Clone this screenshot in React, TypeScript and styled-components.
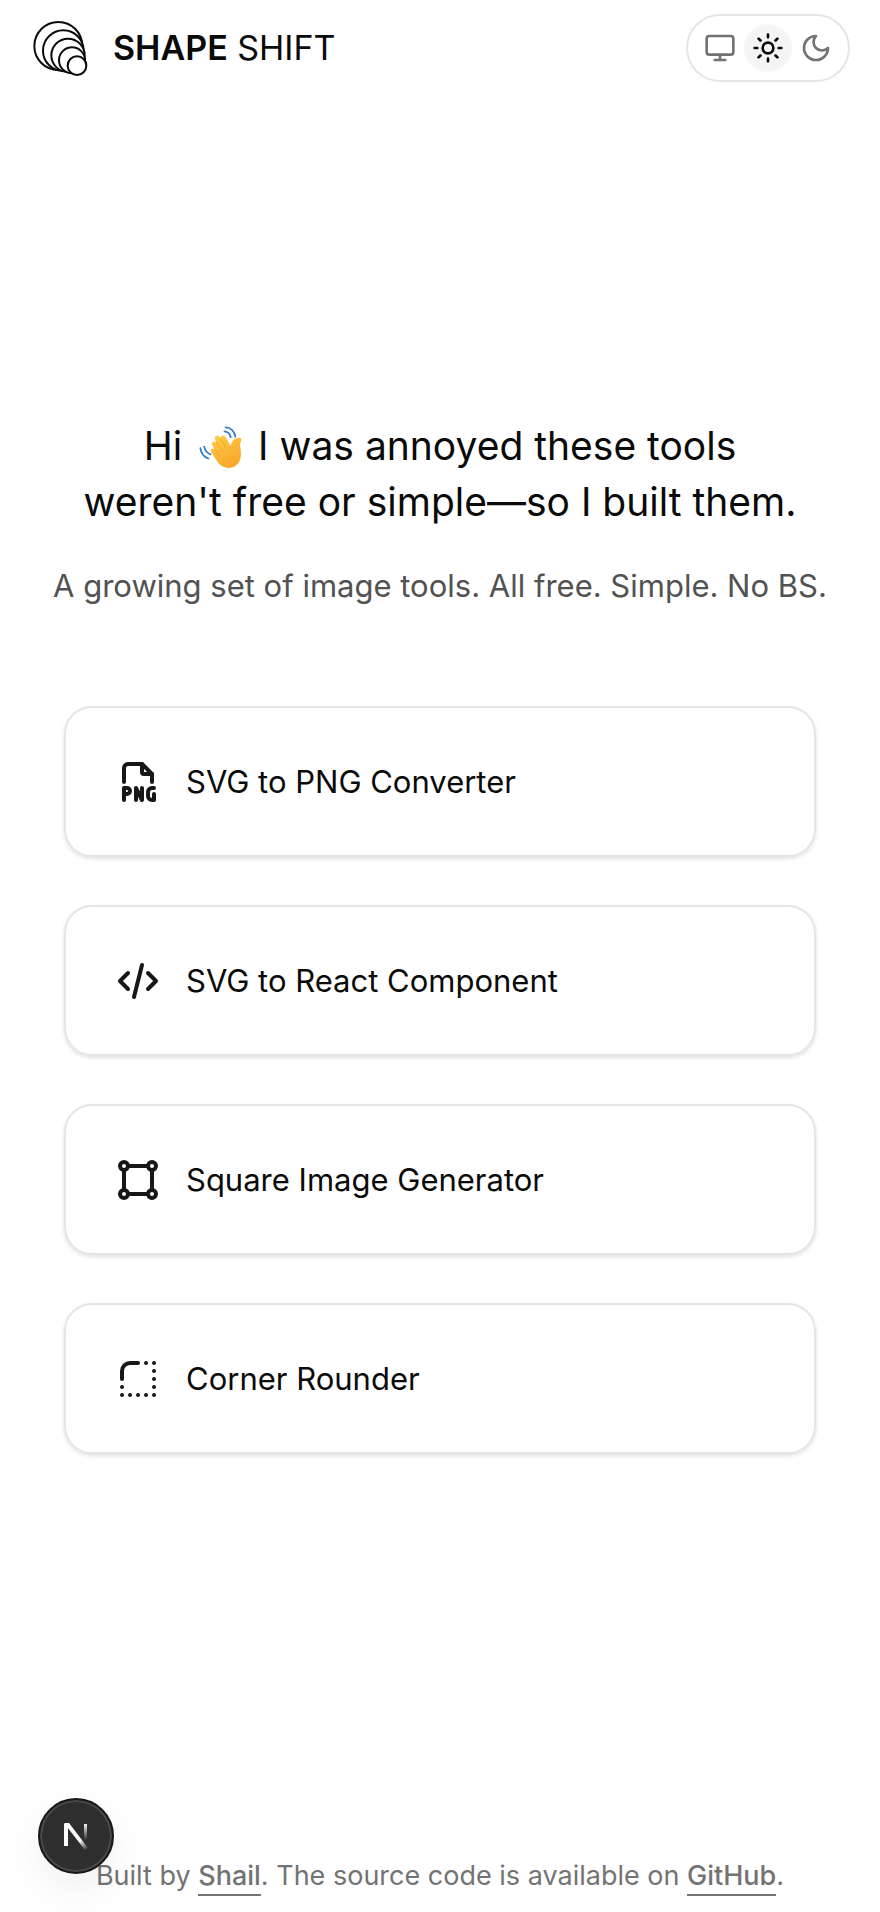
import React from "react";
import styled, { createGlobalStyle } from "styled-components";
import { TbBorderRadius, TbCode, TbFileTypePng, TbShape } from "react-icons/tb";

const GlobalStyle = createGlobalStyle`
  *, *::before, *::after { box-sizing: border-box; }
  body {
    margin: 0;
    background: #fff;
    color: #0a0a0a;
    font-family: Inter, "Liberation Sans", sans-serif;
  }
`;

const Page = styled.div`
  display: flex;
  flex-direction: column;
  min-height: 100vh;
`;

const Header = styled.header`
  display: flex;
  align-items: center;
  justify-content: space-between;
  min-height: 96px;
  padding: 0 30px 0 32px;
`;

const Brand = styled.a`
  display: flex;
  align-items: center;
  gap: 24px;
  color: inherit;
  font-size: 34px;
  line-height: 48px;
  text-decoration: none;
`;

const BrandName = styled.span`
  strong { font-weight: 600; }
`;

const ThemeSwitch = styled.div`
  display: flex;
  padding: 8px;
  border: 2px solid #e5e5e5;
  border-radius: 34px;
`;

const ThemeButton = styled.button<{ $active?: boolean }>`
  display: grid;
  place-items: center;
  width: 48px;
  height: 48px;
  padding: 0;
  border: 0;
  border-radius: 50%;
  background: ${(p) => (p.$active ? "#f5f5f5" : "transparent")};
  color: ${(p) => (p.$active ? "#0a0a0a" : "#737373")};
  cursor: pointer;
`;

const Main = styled.main`
  display: flex;
  flex: 1;
  flex-direction: column;
  align-items: center;
  justify-content: center;
  padding: 0 32px;
`;

const Title = styled.h1`
  margin: 0;
  font-size: 39px;
  font-weight: 400;
  line-height: 56px;
  text-align: center;
`;

const Wave = styled.svg`
  width: 44px;
  height: 44px;
  margin: 0 4px 0 6px;
  vertical-align: -9px;
`;

const Subtitle = styled.p`
  margin: 32px 0 0;
  color: #525252;
  font-size: 31px;
  line-height: 48px;
  text-align: center;
`;

const Tools = styled.nav`
  display: grid;
  gap: 48px;
  width: 100%;
  max-width: 752px;
  margin-top: 96px;
`;

const ToolCard = styled.a`
  display: flex;
  align-items: center;
  gap: 24px;
  min-height: 151px;
  padding: 0 48px;
  border: 2px solid #e5e5e5;
  border-radius: 28px;
  box-shadow: 0 2px 4px rgba(0, 0, 0, 0.12);
  color: inherit;
  font-size: 31px;
  line-height: 48px;
  text-decoration: none;

  svg { color: #171717; flex: none; }
`;

const Footer = styled.footer`
  padding: 80px 32px 16px;
  color: #737373;
  font-size: 27px;
  line-height: 40px;
  text-align: center;
`;

const FooterLink = styled.a`
  padding-bottom: 2px;
  border-bottom: 2px solid #737373;
  color: inherit;
  font-weight: 500;
  text-decoration: none;
`;

const DevBadge = styled.button`
  position: fixed;
  bottom: 38px;
  left: 38px;
  display: grid;
  place-items: center;
  width: 76px;
  height: 76px;
  padding: 0;
  border: 2px solid #171717;
  border-radius: 50%;
  background: #2e2e2e;
  box-shadow: inset 0 0 0 2px #4a4a4a, 0 16px 48px -8px rgba(0, 0, 0, 0.1);
`;

const rings = [
  [114, 108, 72],
  [129, 122, 61],
  [143, 136, 50],
  [155, 151, 39],
  [170, 167, 28],
];

const Logo = () => (
  <svg width="57" height="57" viewBox="35 30 171 171" aria-hidden="true">
    {rings.map(([cx, cy, r]) => (
      <circle key={r} cx={cx} cy={cy} r={r} fill="#fff" stroke="#0a0a0a" strokeWidth="6" />
    ))}
  </svg>
);

const ThemeIcon = ({ children }: { children: React.ReactNode }) => (
  <svg
    width="32"
    height="32"
    viewBox="0 0 24 24"
    fill="none"
    stroke="currentColor"
    strokeWidth="2"
    strokeLinecap="round"
    strokeLinejoin="round"
    aria-hidden="true"
  >
    {children}
  </svg>
);

const WavingHand = () => (
  <Wave viewBox="0 0 126 126" role="img" aria-label="waving hand">
    <defs>
      <linearGradient id="skin" x1="0" y1="0" x2="0.5" y2="1">
        <stop offset="0" stopColor="#ffcf4a" />
        <stop offset="1" stopColor="#f9a72b" />
      </linearGradient>
    </defs>
    <g fill="none" stroke="#2f7fc4" strokeWidth="5" strokeLinecap="round">
      <path d="M76 7c15 0 26 11 28 26M73 18c9 1 16 8 18 17" />
      <path d="M4 66c2 15 11 26 23 30M15 62c2 11 9 19 18 22" />
    </g>
    <path
      fill="url(#skin)"
      d="M35 78c-5-7 3-14 9-9L38 59c-5-9 5-16 12-9l-4-9c-4-9 8-15 13-6l3 4c-2-9 10-13 15-4l14 25c2-10 6-20 18-23 9-2 15 3 12 8-4 7-4 13-2 22 3 20 1 39-13 49-16 12-38 8-51-7z"
    />
    <path d="M50 50l17 25M61 38l17 28M44 69l13 14" fill="none" stroke="#eb9a25" strokeWidth="2" strokeLinecap="round" />
  </Wave>
);

const NextMark = () => (
  <svg width="28" height="30" viewBox="0 0 28 30" aria-hidden="true">
    <defs>
      <linearGradient id="diagonal" x1="14" y1="16" x2="25" y2="29" gradientUnits="userSpaceOnUse">
        <stop offset="0.3" stopColor="#fff" />
        <stop offset="1" stopColor="#fff" stopOpacity="0" />
      </linearGradient>
      <linearGradient id="stem" x1="0" y1="2" x2="0" y2="19" gradientUnits="userSpaceOnUse">
        <stop offset="0" stopColor="#fff" />
        <stop offset="1" stopColor="#fff" stopOpacity="0" />
      </linearGradient>
    </defs>
    <path d="M4 25V3" stroke="#fff" strokeWidth="4" />
    <path d="M2 2h5l19 25-3 2z" fill="url(#diagonal)" />
    <path d="M22 3h3v16h-3z" fill="url(#stem)" />
  </svg>
);

const tools = [
  { name: "SVG to PNG Converter", Icon: TbFileTypePng },
  { name: "SVG to React Component", Icon: TbCode },
  { name: "Square Image Generator", Icon: TbShape },
  { name: "Corner Rounder", Icon: TbBorderRadius },
];

export default function App() {
  return (
    <>
      <GlobalStyle />
      <Page>
        <Header>
          <Brand href="#">
            <Logo />
            <BrandName>
              <strong>SHAPE</strong> SHIFT
            </BrandName>
          </Brand>
          <ThemeSwitch role="group" aria-label="Theme">
            <ThemeButton type="button" aria-label="System theme">
              <ThemeIcon>
                <rect width="20" height="14" x="2" y="3" rx="2" />
                <path d="M8 21h8M12 17v4" />
              </ThemeIcon>
            </ThemeButton>
            <ThemeButton type="button" aria-label="Light theme" aria-pressed="true" $active>
              <ThemeIcon>
                <circle cx="12" cy="12" r="4" />
                <path d="M12 2v2M12 20v2M4.93 4.93l1.41 1.41M17.66 17.66l1.41 1.41M2 12h2M20 12h2M6.34 17.66l-1.41 1.41M19.07 4.93l-1.41 1.41" />
              </ThemeIcon>
            </ThemeButton>
            <ThemeButton type="button" aria-label="Dark theme">
              <ThemeIcon>
                <path d="M12 3a6 6 0 0 0 9 9 9 9 0 1 1-9-9Z" />
              </ThemeIcon>
            </ThemeButton>
          </ThemeSwitch>
        </Header>
        <Main>
          <Title>
            Hi <WavingHand /> I was annoyed these tools
            <br />
            weren't free or simple—so I built them.
          </Title>
          <Subtitle>A growing set of image tools. All free. Simple. No BS.</Subtitle>
          <Tools aria-label="Tools">
            {tools.map(({ name, Icon }) => (
              <ToolCard key={name} href="#">
                <Icon size={48} aria-hidden="true" />
                {name}
              </ToolCard>
            ))}
          </Tools>
        </Main>
        <Footer>
          Built by <FooterLink href="#">Shail</FooterLink>. The source code is available on{" "}
          <FooterLink href="#">GitHub</FooterLink>.
        </Footer>
      </Page>
      <DevBadge type="button" aria-label="Open developer tools">
        <NextMark />
      </DevBadge>
    </>
  );
}
